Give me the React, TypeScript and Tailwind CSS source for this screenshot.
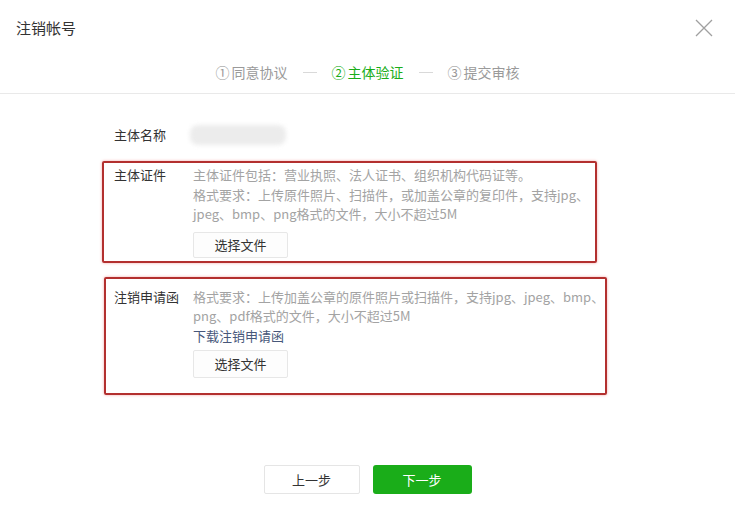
const font = { fontFamily: '"Noto Sans CJK SC", "Noto Sans", sans-serif' };

function Steps() {
  const steps = [
    { n: '①', label: '同意协议', active: false },
    { n: '②', label: '主体验证', active: true },
    { n: '③', label: '提交审核', active: false },
  ];
  return (
    <div className="flex items-center justify-center h-[32px] text-[14px]">
      {steps.map((s, i) => (
        <div key={s.label} className="flex items-center">
          {i > 0 && <span className="w-[14px] h-px bg-[#d9d9d9] mx-[15px]" />}
          <span className={`flex items-center gap-[2px] ${s.active ? 'text-[#1aad19]' : 'text-[#9a9a9a]'}`}>
            <span>{s.n}</span>
            <span>{s.label}</span>
          </span>
        </div>
      ))}
    </div>
  );
}

function FileButton({ h }: { h: string }) {
  return (
    <button className={`w-[95px] ${h} border border-[#e7e7e7] bg-[#fdfdfd] text-[13px] text-[#333] rounded-[2px]`}>
      选择文件
    </button>
  );
}

export default function App() {
  return (
    <div className="w-[735px] h-[512px] bg-white overflow-hidden text-[#333]" style={font}>
      {/* header */}
      <div className="flex items-center justify-between h-[56px] pl-[16px] pr-[22px]">
        <h1 className="text-[15px] text-[#333]">注销帐号</h1>
        <svg width="18" height="18" viewBox="0 0 18 18" className="text-[#a0a0a0]">
          <path d="M1 1 L17 17 M17 1 L1 17" stroke="currentColor" strokeWidth="1.3" fill="none" />
        </svg>
      </div>
      <Steps />
      <div className="mt-[5px] h-px bg-[#e9e9e9]" />

      <div className="pt-[30px]">
        {/* name */}
        <div className="flex items-center h-[22px] pl-[114px]">
          <span className="w-[76px] text-[13px]">主体名称</span>
          <div className="w-[96px] h-[20px] rounded-[8px] bg-[#ececec] blur-[2px]" />
        </div>

        {/* certificate */}
        <div className="mt-[15px] ml-[102px] w-[495px] border-2 border-[#b3302f] rounded-[2px] shadow-[0_0_3px_#f3a6a6] pt-[2px] pb-[3px] pl-[10px] flex">
          <span className="w-[79px] shrink-0 text-[13px] leading-[20px] text-[#333]">主体证件</span>
          <div className="text-[13px] leading-[19.5px] text-[#a3a3a3]">
            <p className="whitespace-nowrap">主体证件包括：营业执照、法人证书、组织机构代码证等。</p>
            <p className="whitespace-nowrap">格式要求：上传原件照片、扫描件，或加盖公章的复印件，支持jpg、</p>
            <p className="whitespace-nowrap">jpeg、bmp、png格式的文件，大小不超过5M</p>
            <div className="mt-[8px]">
              <FileButton h="h-[26px]" />
            </div>
          </div>
        </div>

        {/* letter */}
        <div className="mt-[14px] ml-[104px] w-[503px] border-2 border-[#b3302f] rounded-[2px] shadow-[0_0_3px_#f3a6a6] pt-[8px] pb-[15px] pl-[8px] flex">
          <span className="w-[79px] shrink-0 text-[13px] leading-[20px] text-[#333]">注销申请函</span>
          <div className="text-[13px] leading-[19.5px] text-[#a3a3a3]">
            <p className="whitespace-nowrap">格式要求：上传加盖公章的原件照片或扫描件，支持jpg、jpeg、bmp、</p>
            <p className="whitespace-nowrap">png、pdf格式的文件，大小不超过5M</p>
            <a className="block text-[#47577a] cursor-pointer">下载注销申请函</a>
            <div className="mt-[5px]">
              <FileButton h="h-[28px]" />
            </div>
          </div>
        </div>
      </div>

      {/* footer */}
      <div className="flex justify-center gap-[13px] mt-[70px]">
        <button className="w-[96px] h-[29px] border border-[#e5e5e5] bg-white text-[13px] text-[#333] rounded-[2px]">
          上一步
        </button>
        <button className="w-[99px] h-[29px] bg-[#1aad19] text-[13px] text-white rounded-[3px]">
          下一步
        </button>
      </div>
    </div>
  );
}
